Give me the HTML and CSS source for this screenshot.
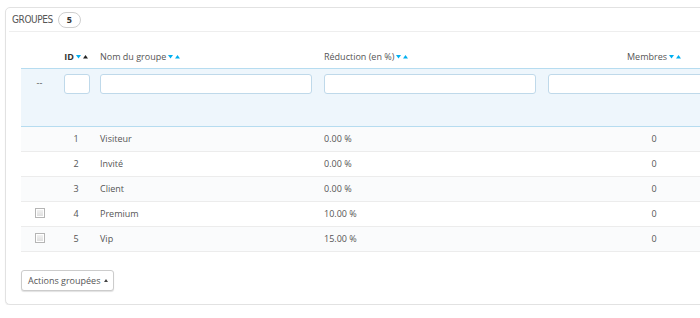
FILE: index.html
```html
<!DOCTYPE html>
<html lang="fr">
<head>
<meta charset="utf-8">
<title>Groupes</title>
<link rel="stylesheet" href="styles.css">
</head>
<body>
<div class="page">
  <div class="panel">
    <div class="panel-heading">
      <span class="title">GROUPES</span>
      <span class="badge">5</span>
    </div>
    <table class="grid">
      <colgroup>
        <col class="c-check"><col class="c-id"><col class="c-wide"><col class="c-wide"><col class="c-wide"><col class="c-rest">
      </colgroup>
      <thead>
        <tr class="head">
          <th></th>
          <th class="center"><span class="id">ID</span><svg class="sort" width="12" height="6" viewBox="0 0 12 6"><polygon points="0,1 5,1 2.5,4.5" fill="#00aff0"/><polygon points="7,4.5 12,4.5 9.5,1" fill="#222"/></svg></th>
          <th>Nom du groupe<svg class="sort" width="12" height="6" viewBox="0 0 12 6"><polygon points="0,1 5,1 2.5,4.5" fill="#00aff0"/><polygon points="7,4.5 12,4.5 9.5,1" fill="#00aff0"/></svg></th>
          <th>Réduction (en %)<svg class="sort" width="12" height="6" viewBox="0 0 12 6"><polygon points="0,1 5,1 2.5,4.5" fill="#00aff0"/><polygon points="7,4.5 12,4.5 9.5,1" fill="#00aff0"/></svg></th>
          <th class="center">Membres<svg class="sort" width="12" height="6" viewBox="0 0 12 6"><polygon points="0,1 5,1 2.5,4.5" fill="#00aff0"/><polygon points="7,4.5 12,4.5 9.5,1" fill="#00aff0"/></svg></th>
          <th></th>
        </tr>
        <tr class="filter">
          <td class="center dash">--</td>
          <td><input class="field small" type="text"></td>
          <td><input class="field" type="text"></td>
          <td><input class="field" type="text"></td>
          <td><input class="field" type="text"></td>
          <td></td>
        </tr>
      </thead>
      <tbody>
        <tr class="odd"><td></td><td class="center">1</td><td>Visiteur</td><td>0.00 %</td><td class="center">0</td><td></td></tr>
        <tr><td></td><td class="center">2</td><td>Invité</td><td>0.00 %</td><td class="center">0</td><td></td></tr>
        <tr class="odd"><td></td><td class="center">3</td><td>Client</td><td>0.00 %</td><td class="center">0</td><td></td></tr>
        <tr><td class="center"><span class="check"></span></td><td class="center">4</td><td>Premium</td><td>10.00 %</td><td class="center">0</td><td></td></tr>
        <tr class="odd"><td class="center"><span class="check"></span></td><td class="center">5</td><td>Vip</td><td>15.00 %</td><td class="center">0</td><td></td></tr>
      </tbody>
    </table>
    <div class="footer">
      <button class="btn" type="button">Actions groupées <span class="caret"></span></button>
    </div>
  </div>
</div>
</body>
</html>
```
FILE: styles.css
```css
html, body {
  margin: 0;
  padding: 0;
  background: #ffffff;
  overflow: hidden;
}
body {
  font-family: "Open Sans", "DejaVu Sans", sans-serif;
  font-size: 9px;
  color: #555555;
}
.page {
  padding: 7px 0 0 5px;
}
.panel {
  width: 800px;
  border: 1px solid #e2e2e2;
  border-radius: 5px;
  box-shadow: 0 1px 1px rgba(0, 0, 0, 0.08);
  padding: 0 0 13px 15px;
  background: #fff;
}
.panel-heading {
  margin-left: -12px;
  height: 23px;
  padding-left: 3px;
  border-bottom: 1px solid #eeeeee;
  display: flex;
  align-items: center;
  gap: 5px;
}
.title {
  font-family: "DejaVu Sans Condensed", "DejaVu Sans", sans-serif;
  font-stretch: condensed;
  font-size: 10px;
  letter-spacing: -0.4px;
  color: #555;
}
.badge {
  display: inline-flex;
  align-items: center;
  justify-content: center;
  min-width: 21px;
  height: 14px;
  border: 1px solid #cfcfcf;
  border-radius: 8px;
  font-weight: 700;
  color: #333;
  font-size: 9px;
}
.grid {
  margin-top: 13px;
  border-collapse: separate;
  border-spacing: 0;
  table-layout: fixed;
  width: 765px;
}
.c-check { width: 37px; }
.c-id { width: 36px; }
.c-wide { width: 224px; }
.c-rest { width: 20px; }
.grid th {
  font-weight: 400;
  text-align: left;
  padding: 0 6px;
  line-height: 23px;
  white-space: nowrap;
  border-bottom: 1px solid #b6dcf0;
  color: #555;
}
.grid .center {
  text-align: center;
}
.id {
  font-weight: 700;
  color: #333;
}
.sort {
  margin-left: 2px;
  vertical-align: 0px;
}
.filter td {
  background: #eef6fc;
  padding: 5px 6px 32px;
  border-bottom: 1px solid #b6dcf0;
  vertical-align: top;
}
.dash {
  line-height: 14px;
  padding-top: 7px !important;
  color: #555;
}
.field {
  display: block;
  box-sizing: border-box;
  width: 100%;
  height: 20px;
  margin: 0;
  border: 1px solid #bfd9ea;
  border-radius: 3px;
  background: #fff;
  padding: 0 4px;
}
.field.small {
  width: 26px;
  margin: 0 auto;
}
.grid tbody td {
  line-height: 24px;
  padding: 0 6px;
  border-bottom: 1px solid #ececec;
  white-space: nowrap;
  background: #fff;
}
.grid tbody tr.odd td {
  background: #fafbfc;
}
.check {
  display: inline-block;
  width: 8px;
  height: 8px;
  border: 1px solid #b5b5b5;
  background: linear-gradient(#f4f4f4, #dcdcdc);
  vertical-align: -1px;
  box-shadow: inset 0 0 0 1px #fff;
}
.footer {
  padding-top: 18px;
}
.btn {
  display: inline-flex;
  align-items: center;
  gap: 4px;
  height: 21px;
  padding: 0 5px 0 6px;
  border: 1px solid #cccccc;
  border-radius: 3px;
  background: #fff;
  box-shadow: 0 1px 1px rgba(0, 0, 0, 0.12);
  font-family: "Open Sans", "DejaVu Sans", sans-serif;
  font-size: 9px;
  color: #555;
}
.caret {
  width: 0;
  height: 0;
  border-left: 2.5px solid transparent;
  border-right: 2.5px solid transparent;
  border-bottom: 3px solid #444;
}
```
